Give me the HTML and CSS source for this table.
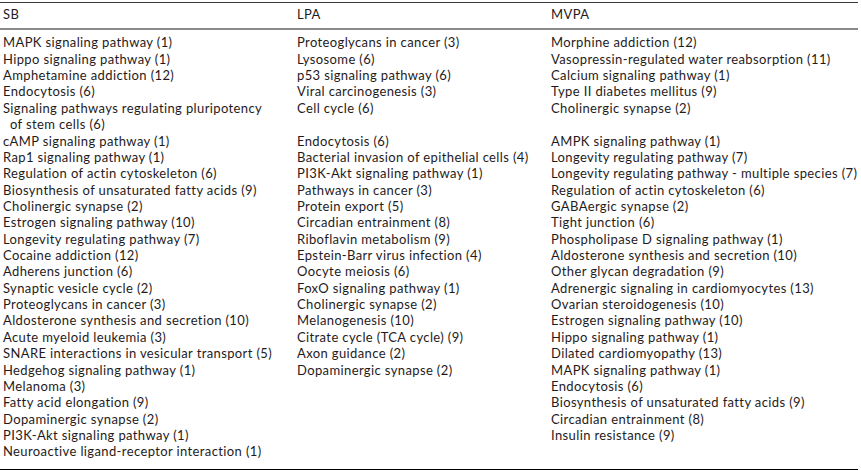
FILE: index.html
```html
<!DOCTYPE html>
<html>
<head>
<meta charset="utf-8">
<link rel="stylesheet" href="styles.css">
</head>
<body>
<table class="kegg">
<thead>
<tr><th class="c1">SB</th><th class="c2">LPA</th><th class="c3">MVPA</th></tr>
</thead>
<tbody>
<tr class="first"><td>MAPK signaling pathway (1)</td><td>Proteoglycans in cancer (3)</td><td>Morphine addiction (12)</td></tr>
<tr><td>Hippo signaling pathway (1)</td><td>Lysosome (6)</td><td>Vasopressin-regulated water reabsorption (11)</td></tr>
<tr><td>Amphetamine addiction (12)</td><td>p53 signaling pathway (6)</td><td>Calcium signaling pathway (1)</td></tr>
<tr><td>Endocytosis (6)</td><td>Viral carcinogenesis (3)</td><td>Type II diabetes mellitus (9)</td></tr>
<tr><td class="hang">Signaling pathways regulating pluripotency of stem cells (6)</td><td>Cell cycle (6)</td><td>Cholinergic synapse (2)</td></tr>
<tr><td>cAMP signaling pathway (1)</td><td>Endocytosis (6)</td><td>AMPK signaling pathway (1)</td></tr>
<tr><td>Rap1 signaling pathway (1)</td><td>Bacterial invasion of epithelial cells (4)</td><td>Longevity regulating pathway (7)</td></tr>
<tr><td>Regulation of actin cytoskeleton (6)</td><td>PI3K-Akt signaling pathway (1)</td><td>Longevity regulating pathway - multiple species (7)</td></tr>
<tr><td>Biosynthesis of unsaturated fatty acids (9)</td><td>Pathways in cancer (3)</td><td>Regulation of actin cytoskeleton (6)</td></tr>
<tr><td>Cholinergic synapse (2)</td><td>Protein export (5)</td><td>GABAergic synapse (2)</td></tr>
<tr><td>Estrogen signaling pathway (10)</td><td>Circadian entrainment (8)</td><td>Tight junction (6)</td></tr>
<tr><td>Longevity regulating pathway (7)</td><td>Riboflavin metabolism (9)</td><td>Phospholipase D signaling pathway (1)</td></tr>
<tr><td>Cocaine addiction (12)</td><td>Epstein-Barr virus infection (4)</td><td>Aldosterone synthesis and secretion (10)</td></tr>
<tr><td>Adherens junction (6)</td><td>Oocyte meiosis (6)</td><td>Other glycan degradation (9)</td></tr>
<tr><td>Synaptic vesicle cycle (2)</td><td>FoxO signaling pathway (1)</td><td>Adrenergic signaling in cardiomyocytes (13)</td></tr>
<tr><td>Proteoglycans in cancer (3)</td><td>Cholinergic synapse (2)</td><td>Ovarian steroidogenesis (10)</td></tr>
<tr><td>Aldosterone synthesis and secretion (10)</td><td>Melanogenesis (10)</td><td>Estrogen signaling pathway (10)</td></tr>
<tr><td>Acute myeloid leukemia (3)</td><td>Citrate cycle (TCA cycle) (9)</td><td>Hippo signaling pathway (1)</td></tr>
<tr><td>SNARE interactions in vesicular transport (5)</td><td>Axon guidance (2)</td><td>Dilated cardiomyopathy (13)</td></tr>
<tr><td>Hedgehog signaling pathway (1)</td><td>Dopaminergic synapse (2)</td><td>MAPK signaling pathway (1)</td></tr>
<tr><td>Melanoma (3)</td><td></td><td>Endocytosis (6)</td></tr>
<tr><td>Fatty acid elongation (9)</td><td></td><td>Biosynthesis of unsaturated fatty acids (9)</td></tr>
<tr><td>Dopaminergic synapse (2)</td><td></td><td>Circadian entrainment (8)</td></tr>
<tr><td>PI3K-Akt signaling pathway (1)</td><td></td><td>Insulin resistance (9)</td></tr>
<tr class="last"><td>Neuroactive ligand-receptor interaction (1)</td><td></td><td></td></tr>
</tbody>
</table>
</body>
</html>
```

FILE: styles.css
```css
html, body {
  margin: 0;
  padding: 0;
  background: #ffffff;
}

body {
  padding-top: 2px;
}

.kegg {
  width: 858px;
  border-collapse: collapse;
  table-layout: fixed;
  font-family: Lato, "Noto Sans", sans-serif;
  font-size: 13px;
  letter-spacing: 0.38px;
  line-height: 16.36px;
  color: #1f1b1c;
}

.kegg th {
  font-weight: normal;
  text-align: left;
  padding: 3px 0 6px 3px;
  border-top: 1px solid #3a3a3a;
  border-bottom: 2px solid #8a8a8a;
  vertical-align: top;
}

.kegg th.c1 { width: 291px; }
.kegg th.c2 { width: 251px; }
.kegg th.c3 { width: auto; }

.kegg td {
  padding: 0 0 0 3px;
  vertical-align: top;
  height: 16.36px;
  white-space: nowrap;
}

.kegg td.hang {
  white-space: normal;
  padding-left: 10px;
  text-indent: -7px;
  padding-right: 20px;
}

.kegg tr.first td {
  padding-top: 4px;
}

.kegg tr.last td {
  padding-bottom: 9px;
  border-bottom: 1px solid #000000;
}
```
